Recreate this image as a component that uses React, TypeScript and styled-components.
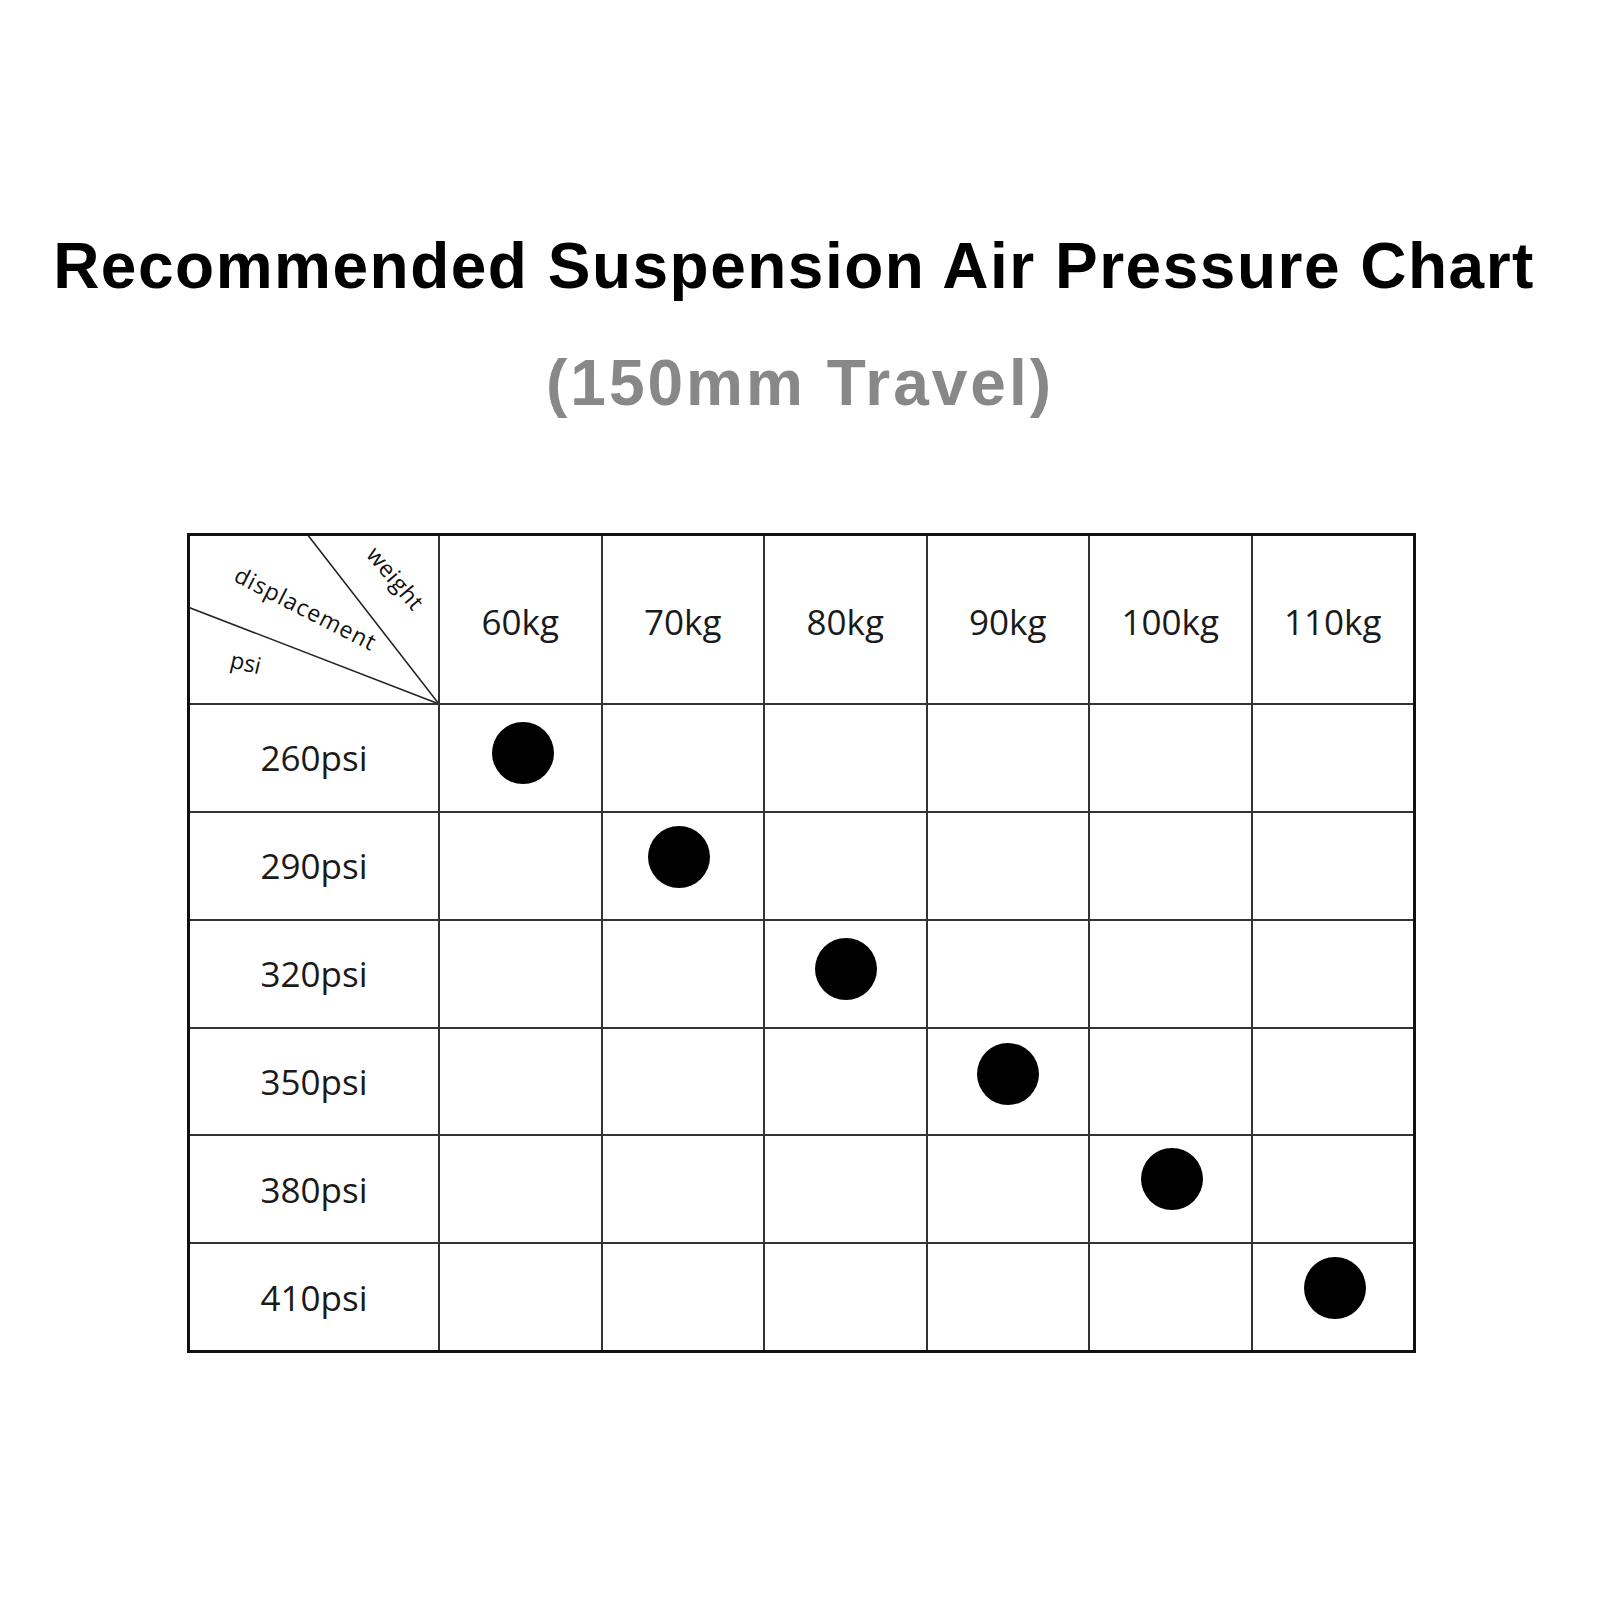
import React from "react";
import styled, { createGlobalStyle } from "styled-components";

const Global = createGlobalStyle`
  html, body { margin: 0; padding: 0; background: #ffffff; }
  body { font-family: "Liberation Sans", Arial, sans-serif; }
`;

const Page = styled.div`
  width: 1600px;
  min-height: 1600px;
  box-sizing: border-box;
  padding-top: 234px;
  display: flex;
  flex-direction: column;
  background: #ffffff;
`;

const Title = styled.h1`
  margin: 0;
  font-family: "Liberation Sans", Arial, sans-serif;
  font-weight: 700;
  font-size: 64px;
  line-height: 64px;
  letter-spacing: 1.5px;
  color: #000;
  text-align: center;
  transform: translateX(-6px);
`;

const Subtitle = styled.h2`
  margin: 53px 0 0;
  font-family: "Liberation Sans", Arial, sans-serif;
  font-weight: 700;
  font-size: 64px;
  line-height: 64px;
  letter-spacing: 3px;
  color: #888888;
  text-align: center;
`;

const Table = styled.div`
  margin: 118px 0 0 187px;
  width: 1229px;
  height: 820px;
  box-sizing: border-box;
  border: 3px solid #111;
  background: #333;
  display: grid;
  grid-template-columns: 248px repeat(6, 1fr);
  grid-template-rows: 167px repeat(6, 1fr);
  gap: 2px;
`;

const Cell = styled.div`
  background: #fff;
  display: flex;
  align-items: center;
  justify-content: center;
  font-family: "Open Sans", "Noto Sans", sans-serif;
  font-size: 35px;
  color: #1a1a1a;
`;

const HeadCell = styled(Cell)`
  padding-top: 4px;
`;

const CornerSvg = styled.svg`
  display: block;
  width: 100%;
  height: 100%;
`;

const Dot = styled.div<{ $dx: number; $dy: number }>`
  width: 62px;
  height: 62px;
  border-radius: 50%;
  background: #000;
  transform: translate(${(p) => p.$dx}px, ${(p) => p.$dy}px);
`;

const weights = ["60kg", "70kg", "80kg", "90kg", "100kg", "110kg"];
const pressures = ["260psi", "290psi", "320psi", "350psi", "380psi", "410psi"];
const offsets: [number, number][] = [
  [3, -5],
  [-4, -9],
  [1, -5],
  [0, -7],
  [2, -10],
  [2, -9],
];

const Corner = () => (
  <Cell>
    <CornerSvg viewBox="0 0 248 167" preserveAspectRatio="none">
      <line x1="117" y1="-2" x2="249" y2="168" stroke="#222" strokeWidth="1.6" />
      <line x1="-2" y1="71" x2="249" y2="168" stroke="#222" strokeWidth="1.6" />
      <g fontFamily="'Open Sans', 'Noto Sans', sans-serif" fill="#111" textAnchor="middle" dominantBaseline="central">
        <text x="206" y="42" fontSize="23" letterSpacing="0.5" transform="rotate(50 206 42)">weight</text>
        <text x="116" y="72" fontSize="23" letterSpacing="1" transform="rotate(27 116 72)">displacement</text>
        <text x="56" y="126" fontSize="23" transform="rotate(13 56 126)">psi</text>
      </g>
    </CornerSvg>
  </Cell>
);

export default function App() {
  return (
    <>
      <Global />
      <Page>
        <Title>Recommended Suspension Air Pressure Chart</Title>
        <Subtitle>(150mm Travel)</Subtitle>
        <Table>
          <Corner />
          {weights.map((w) => (
            <HeadCell key={w}>{w}</HeadCell>
          ))}
          {pressures.map((p, r) => (
            <React.Fragment key={p}>
              <Cell>{p}</Cell>
              {weights.map((w, c) => (
                <Cell key={w}>
                  {c === r ? <Dot $dx={offsets[r][0]} $dy={offsets[r][1]} /> : null}
                </Cell>
              ))}
            </React.Fragment>
          ))}
        </Table>
      </Page>
    </>
  );
}
